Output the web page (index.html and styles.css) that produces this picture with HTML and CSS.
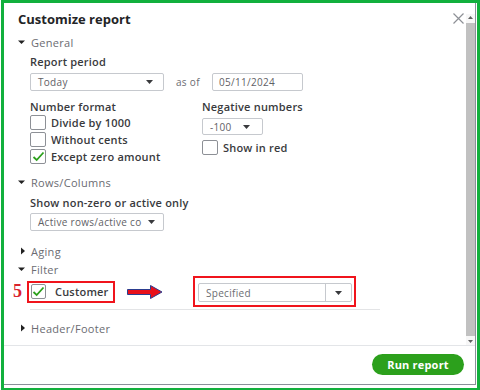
FILE: index.html
```html
<!DOCTYPE html>
<html lang="en">
<head>
    <meta charset="UTF-8">
    <title>Customize report</title>
    <link rel="stylesheet" href="styles.css">
</head>
<body>
    <div class="frame">
        <div class="dialog">
            <div class="main">
                <div class="content">
                    <h1 class="title">Customize report</h1>

                    <div class="sec-head">
                        <svg class="caret" width="8" height="8" viewBox="0 0 8 8"><path d="M0 2.5h7L3.5 6z" fill="#222"/></svg>
                        General
                    </div>
                    <div class="sec-body">
                        <div class="field-label">Report period</div>
                        <div class="period-row">
                            <div class="select select-wide">
                                <span class="select-text">Today</span>
                                <svg class="arrow" width="7" height="4" viewBox="0 0 7 4"><path d="M0 0h7L3.5 4z" fill="#393a3d"/></svg>
                            </div>
                            <span class="as-of">as of</span>
                            <div class="input-date">05/11/2024</div>
                        </div>

                        <div class="two-col">
                            <div class="col-left">
                                <div class="col-label">Number format</div>
                                <label class="check-row"><span class="checkbox"></span>Divide by 1000</label>
                                <label class="check-row"><span class="checkbox"></span>Without cents</label>
                                <label class="check-row"><span class="checkbox checked"><svg width="13" height="11" viewBox="0 0 13 11"><path d="M1.5 6l3.2 3L11.5 1.5" fill="none" stroke="#2ca01c" stroke-width="1.8"/></svg></span>Except zero amount</label>
                            </div>
                            <div class="col-right">
                                <div class="col-label">Negative numbers</div>
                                <div class="select select-neg">
                                    <span class="select-text">-100</span>
                                    <svg class="arrow" width="7" height="4" viewBox="0 0 7 4"><path d="M0 0h7L3.5 4z" fill="#393a3d"/></svg>
                                </div>
                                <label class="check-row red-row"><span class="checkbox"></span>Show in red</label>
                            </div>
                        </div>
                    </div>

                    <div class="sec-head sec-rows">
                        <svg class="caret" width="8" height="8" viewBox="0 0 8 8"><path d="M0 2.5h7L3.5 6z" fill="#222"/></svg>
                        Rows/Columns
                    </div>
                    <div class="sec-body">
                        <div class="field-label label-active">Show non-zero or active only</div>
                        <div class="select select-wide select-active">
                            <span class="select-text">Active rows/active co</span>
                            <svg class="arrow" width="7" height="4" viewBox="0 0 7 4"><path d="M0 0h7L3.5 4z" fill="#393a3d"/></svg>
                        </div>
                    </div>

                    <div class="sec-head sec-aging">
                        <svg class="caret" width="8" height="8" viewBox="0 0 8 8"><path d="M3 0.5v7L7 4z" fill="#222"/></svg>
                        Aging
                    </div>

                    <div class="sec-head sec-filter">
                        <svg class="caret" width="8" height="8" viewBox="0 0 8 8"><path d="M0 2.5h7L3.5 6z" fill="#222"/></svg>
                        Filter
                    </div>
                    <div class="filter-row">
                        <span class="step">5</span>
                        <div class="mark mark-customer">
                            <span class="checkbox checked"><svg width="13" height="11" viewBox="0 0 13 11"><path d="M1.5 6l3.2 3L11.5 1.5" fill="none" stroke="#2ca01c" stroke-width="1.8"/></svg></span>
                            <span class="customer-text">Customer</span>
                        </div>
                        <svg class="red-arrow" width="36" height="14" viewBox="0 0 36 14">
                            <path d="M0.5 4.5h23v-4l11.5 6.5-11.5 6.5v-4h-23z" fill="#e8101a" stroke="#2b3d8f" stroke-width="1"/>
                        </svg>
                        <div class="mark mark-select">
                            <div class="select select-spec">
                                <span class="select-text">Specified</span>
                                <span class="spec-btn">
                                    <svg width="7" height="4" viewBox="0 0 7 4"><path d="M0 0h7L3.5 4z" fill="#393a3d"/></svg>
                                </span>
                            </div>
                        </div>
                    </div>
                    <div class="rule"></div>

                    <div class="sec-head sec-header">
                        <svg class="caret" width="8" height="8" viewBox="0 0 8 8"><path d="M3 0.5v7L7 4z" fill="#222"/></svg>
                        Header/Footer
                    </div>
                </div>

                <div class="scrollbar">
                    <svg class="sb-arrow" width="9" height="7" viewBox="0 0 9 7"><path d="M2 5h5L4.5 2z" fill="#606060"/></svg>
                    <div class="sb-thumb"></div>
                    <svg class="sb-arrow" width="9" height="7" viewBox="0 0 9 7"><path d="M2 2h5L4.5 5z" fill="#606060"/></svg>
                </div>

                <button class="close" aria-label="Close">
                    <svg width="11" height="11" viewBox="0 0 11 11"><path d="M0.5 0.5l10 10M10.5 0.5l-10 10" stroke="#8d9096" stroke-width="1.2"/></svg>
                </button>
            </div>

            <div class="footer">
                <button class="run">Run report</button>
            </div>
        </div>
    </div>
</body>
</html>
```

FILE: styles.css
```css
body {
    margin: 0;
    background: #ffffff;
    font-family: "Open Sans", "DejaVu Sans", sans-serif;
    color: #393a3d;
}
.frame {
    margin-left: 1px;
    width: 472px;
    height: 383px;
    border: 3px solid #12b03d;
    background: #ffffff;
    padding: 0 1px 2px 0;
}
.dialog {
    height: 381px;
    border-right: 1px solid #8a9099;
    border-bottom: 1px solid #8a9099;
    display: flex;
    flex-direction: column;
    background: #ffffff;
}
.main {
    position: relative;
    flex: 1;
    display: flex;
}
.content {
    flex: 1;
    padding: 7px 0 0 14px;
}
.title {
    margin: 0;
    font-size: 13px;
    line-height: 18px;
    font-weight: 700;
    color: #232426;
}
.sec-head {
    display: flex;
    align-items: center;
    margin-top: 6px;
    height: 16px;
    font-size: 11px;
    color: #6b6c72;
    letter-spacing: 0.3px;
}
.caret {
    margin-right: 5px;
}
.sec-body {
    padding-left: 12px;
}
.field-label {
    margin-top: 4px;
    line-height: 16px;
    font-size: 11px;
    font-weight: 600;
    letter-spacing: 0.2px;
}
.period-row {
    margin-top: 3px;
    display: flex;
    align-items: center;
}
.select {
    box-sizing: border-box;
    height: 18px;
    border: 1px solid #c6c9ce;
    border-radius: 2px;
    background: #ffffff;
    display: flex;
    align-items: center;
    font-size: 10px;
    color: #5f6166;
    letter-spacing: 0.3px;
}
.select-text {
    flex: 1;
    padding-left: 7px;
    white-space: nowrap;
    overflow: hidden;
}
.arrow {
    flex: none;
    margin: 0 10px 0 6px;
}
.select-wide {
    width: 134px;
}
.as-of {
    margin-left: 12px;
    width: 36px;
    font-size: 10px;
    color: #6b6c72;
    letter-spacing: 0.3px;
}
.input-date {
    box-sizing: border-box;
    width: 91px;
    height: 18px;
    border: 1px solid #c6c9ce;
    border-radius: 2px;
    padding-left: 6px;
    font-size: 10px;
    line-height: 16px;
    color: #5f6166;
    letter-spacing: 0.3px;
}
.two-col {
    margin-top: 8px;
    display: flex;
}
.col-left {
    width: 172px;
}
.col-label {
    line-height: 15px;
    font-size: 11px;
    font-weight: 600;
    letter-spacing: 0.2px;
}
.check-row {
    display: flex;
    align-items: center;
    height: 17px;
    font-size: 11px;
    font-weight: 600;
    letter-spacing: 0.2px;
}
.checkbox {
    box-sizing: border-box;
    flex: none;
    width: 16px;
    height: 15px;
    border: 1px solid #8d9096;
    border-radius: 2px;
    margin-right: 5px;
    display: flex;
    align-items: center;
    justify-content: center;
    background: #ffffff;
}
.select-neg {
    margin-top: 4px;
    width: 61px;
    height: 17px;
}
.select-neg .arrow {
    margin-right: 12px;
}
.red-row {
    margin-top: 4px;
}
.sec-rows {
    margin-top: 9px;
}
.label-active {
    margin-top: 5px;
}
.select-active {
    margin-top: 2px;
}
.select-active .arrow {
    margin: 0 8px 0 4px;
}
.sec-aging {
    margin-top: 12px;
}
.sec-filter {
    margin-top: 2px;
}
.filter-row {
    margin: -1px 0 0 -5px;
    height: 31px;
    display: flex;
    align-items: center;
}
.step {
    width: 9px;
    margin-right: 5px;
    font-family: "Liberation Serif", serif;
    font-weight: 700;
    font-size: 18px;
    color: #d9232d;
}
.mark {
    box-sizing: border-box;
    border: 2px solid #f0141c;
}
.mark-customer {
    width: 88px;
    height: 22px;
    display: flex;
    align-items: center;
    padding-left: 2px;
}
.mark-customer .checkbox {
    width: 15px;
    margin-right: 9px;
}
.customer-text {
    font-size: 11px;
    font-weight: 600;
    letter-spacing: 0.2px;
}
.red-arrow {
    margin-left: 12px;
}
.mark-select {
    margin-left: 30px;
    width: 163px;
    height: 31px;
    padding: 5px 2px 3px 3px;
}
.select-spec {
    height: 19px;
    color: #6b6c72;
}
.spec-btn {
    width: 25px;
    height: 100%;
    border-left: 1px solid #c6c9ce;
    display: flex;
    align-items: center;
    justify-content: center;
}
.rule {
    margin: 2px 0 0 12px;
    width: 350px;
    height: 1px;
    background: #e3e4e6;
}
.sec-header {
    margin-top: 10px;
}
.scrollbar {
    width: 9px;
    margin-top: 11px;
    display: flex;
    flex-direction: column;
    align-items: center;
    background: #f7f7f7;
}
.sb-arrow {
    flex: none;
}
.sb-thumb {
    flex: 1;
    width: 9px;
    margin: 2px 0;
    background: #c1c1c1;
}
.close {
    position: absolute;
    top: 10px;
    right: 11px;
    padding: 0;
    border: none;
    background: none;
    line-height: 0;
}
.footer {
    height: 38px;
    border-top: 1px solid #e3e5e8;
    display: flex;
    justify-content: flex-end;
    align-items: flex-start;
    padding-right: 11px;
}
.run {
    margin-top: 8px;
    width: 92px;
    height: 21px;
    border: none;
    border-radius: 11px;
    background: #2ca01c;
    color: #ffffff;
    font-family: "Open Sans", "DejaVu Sans", sans-serif;
    font-size: 11px;
    font-weight: 700;
    letter-spacing: 0.2px;
    padding: 0;
}
```
